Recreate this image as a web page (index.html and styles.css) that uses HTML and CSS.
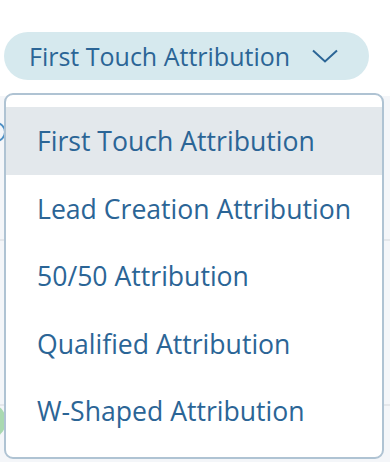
FILE: index.html
```html
<!DOCTYPE html>
<html lang="en">
<head>
    <meta charset="UTF-8">
    <meta name="viewport" content="width=device-width, initial-scale=1.0">
    <title>Attribution Model</title>
    <link rel="stylesheet" href="styles.css">
</head>
<body>
    <div class="report">
        <div class="report-row row-top"><span class="dot dot-blue"></span></div>
        <div class="report-row row-mid"></div>
        <div class="report-row row-low"><span class="dot dot-green"></span></div>
    </div>

    <div class="picker">
        <button class="picker-toggle">
            <span>First Touch Attribution</span>
            <svg class="chevron" width="26" height="14" viewBox="0 0 26 14">
                <path d="M1 1.5 L13 12.5 L25 1.5" fill="none" stroke="#2b6596" stroke-width="2"/>
            </svg>
        </button>

        <ul class="picker-menu">
            <li class="picker-item active">First Touch Attribution</li>
            <li class="picker-item">Lead Creation Attribution</li>
            <li class="picker-item">50/50 Attribution</li>
            <li class="picker-item">Qualified Attribution</li>
            <li class="picker-item">W-Shaped Attribution</li>
        </ul>
    </div>
</body>
</html>
```

FILE: styles.css
```css
body {
    margin: 0;
    padding: 0;
    font-family: "Open Sans", Lato, sans-serif;
    background-color: #fff;
    position: relative;
    height: 462px;
    overflow: hidden;
}

/* faded report behind the menu */
.report {
    position: absolute;
    top: 96px;
    left: 0;
    right: 0;
    bottom: 0;
    background-color: #f4f6f9;
}

.report-row {
    position: relative;
    border-bottom: 2px solid #e4e7eb;
}

.row-top {
    height: 143px;
}

.row-mid {
    height: 163px;
}

.row-low {
    height: 60px;
}

.dot {
    position: absolute;
    border-radius: 50%;
}

.dot-blue {
    left: -14px;
    top: 26px;
    width: 16px;
    height: 16px;
    border: 2px solid #4d8fc4;
}

.dot-green {
    left: -16px;
    top: 0;
    width: 22px;
    height: 30px;
    background-color: #a9d9b0;
}

.picker {
    position: relative;
    padding: 32px 0 0 4px;
}

.picker-toggle {
    display: flex;
    align-items: center;
    width: 365px;
    height: 48px;
    padding: 0 0 0 25px;
    border: none;
    border-radius: 24px;
    background-color: #d6e9ee;
    color: #2b6596;
    font-family: inherit;
    font-size: 25px;
    cursor: pointer;
}

.chevron {
    margin-left: auto;
    margin-right: 31px;
}

.picker-menu {
    position: absolute;
    top: 93px;
    left: 4px;
    width: 376px;
    margin: 0;
    padding: 12px 0;
    list-style: none;
    background-color: #fff;
    border: 2px solid #afc3d3;
    border-radius: 9px;
}

.picker-item {
    height: 67.5px;
    line-height: 69px;
    padding-left: 31px;
    color: #2b6596;
    font-size: 26.6px;
    white-space: nowrap;
}

.picker-item.active {
    background-color: #e3e8ec;
}
```
